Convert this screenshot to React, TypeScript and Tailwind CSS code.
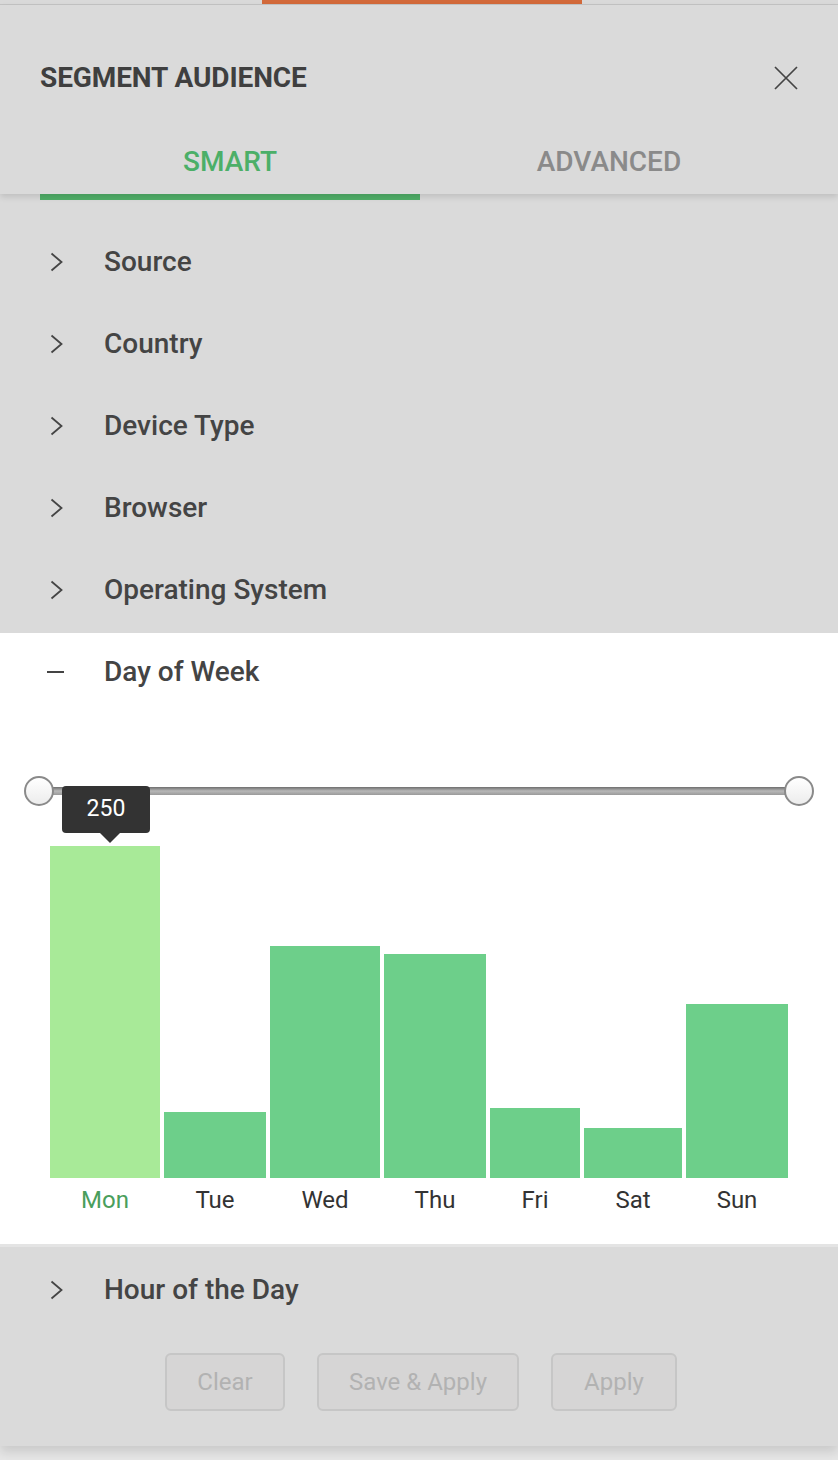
const rows = ["Source", "Country", "Device Type", "Browser", "Operating System"];

const days = [
  { label: "Mon", w: 110, h: 332, active: true },
  { label: "Tue", w: 102, h: 66 },
  { label: "Wed", w: 110, h: 232 },
  { label: "Thu", w: 102, h: 224 },
  { label: "Fri", w: 90, h: 70 },
  { label: "Sat", w: 98, h: 50 },
  { label: "Sun", w: 102, h: 174 },
];

function Chevron() {
  return (
    <svg width="14" height="20" viewBox="0 0 14 20" className="ml-[50px] text-[#444]" fill="none">
      <path d="M1.5 1.5 L11.5 10 L1.5 18.5" stroke="currentColor" strokeWidth="1.8" />
    </svg>
  );
}

function Row({ label }: { label: string }) {
  return (
    <div className="flex h-[82px] items-center">
      <Chevron />
      <span className="ml-[40px] text-[28px] font-medium text-[#444]">{label}</span>
    </div>
  );
}

export default function App() {
  return (
    <div
      className="min-h-[1460px] w-[838px] bg-[#e6e6e6]"
      style={{ fontFamily: "Roboto, 'Liberation Sans', sans-serif" }}
    >
      <div className="relative h-[5px] border-b border-[#c4c4c4] bg-[#d9d9d9]">
        <div className="absolute left-[262px] top-0 h-[4px] w-[320px] bg-[#d2693a]" />
      </div>

      <div className="bg-[#dadada] shadow-[0_6px_10px_rgba(0,0,0,0.12)]">
        <div className="relative z-10 bg-[#dadada] shadow-[0_3px_6px_rgba(0,0,0,0.12)]">
          <div className="flex h-[140px] items-center justify-between pl-[40px] pr-[40px] pt-[6px]">
            <h1 className="text-[28px] font-bold tracking-[-0.1px] text-[#3f3f3f]">SEGMENT AUDIENCE</h1>
            <svg width="24" height="24" viewBox="0 0 24 24" fill="none" className="text-[#444]">
              <path d="M1 1 L23 23 M23 1 L1 23" stroke="currentColor" strokeWidth="1.7" />
            </svg>
          </div>
          <div className="flex h-[49px] px-[40px] pt-[3px]">
            <div className="flex w-[380px] justify-center">
              <span className="text-[28px] font-medium leading-[28px] text-[#4caf68]">SMART</span>
            </div>
            <div className="flex w-[378px] justify-center">
              <span className="text-[28px] font-medium leading-[28px] text-[#8a8a8a]">ADVANCED</span>
            </div>
          </div>
        </div>
        <div className="px-[40px]">
          <div className="h-[6px] w-[380px] bg-[#50ae68]" />
        </div>

        <div className="pt-[21px]">
          {rows.map((r) => (
            <Row key={r} label={r} />
          ))}
        </div>

        <div className="mt-[2px] bg-white">
          <div className="flex h-[78px] items-center">
            <div className="ml-[47px] h-[2.5px] w-[17px] bg-[#444]" />
            <span className="ml-[40px] text-[28px] font-medium text-[#444]">Day of Week</span>
          </div>

          <div className="relative mx-[24px] mt-[65px] h-[30px]">
            <div className="absolute left-[14px] right-[14px] top-[11px] h-[8px] rounded-sm bg-gradient-to-b from-[#6e6e6e] via-[#b8b8b8] to-[#9a9a9a]" />
            <div className="absolute left-0 top-0 h-[30px] w-[30px] rounded-full border-2 border-[#8a8a8a] bg-gradient-to-b from-white to-[#ececec]" />
            <div className="absolute right-0 top-0 h-[30px] w-[30px] rounded-full border-2 border-[#8a8a8a] bg-gradient-to-b from-white to-[#ececec]" />
            <div className="absolute left-[38px] top-[10px] flex h-[47px] w-[88px] items-center justify-center rounded-[4px] bg-[#333] text-[23px] text-white">
              250
              <div className="absolute bottom-[-10px] left-[38px] h-0 w-0 border-x-[10px] border-t-[10px] border-x-transparent border-t-[#333]" />
            </div>
          </div>

          <div className="mx-[50px] mt-[40px] flex h-[332px] items-end gap-[4px]">
            {days.map((d) => (
              <div
                key={d.label}
                className={d.active ? "bg-[#a8ea98]" : "bg-[#6dcf8a]"}
                style={{ width: d.w, height: d.h }}
              />
            ))}
          </div>
          <div className="mx-[50px] flex gap-[4px] pb-[28px] pt-[6px]">
            {days.map((d) => (
              <div
                key={d.label}
                className={`text-center text-[24px] leading-[32px] ${d.active ? "text-[#4a9e5c]" : "text-[#333]"}`}
                style={{ width: d.w }}
              >
                {d.label}
              </div>
            ))}
          </div>
        </div>

        <div className="border-t-[3px] border-[#e4e4e4] pt-[2px]">
          <Row label="Hour of the Day" />
        </div>

        <div className="flex justify-center gap-[32px] pb-[35px] pl-[4px] pt-[22px]">
          <button className="h-[58px] w-[120px] rounded-[6px] border-2 border-[#c6c6c6] bg-[#d6d5d5] text-[24px] text-[#b2b2b2]">
            Clear
          </button>
          <button className="h-[58px] w-[202px] rounded-[6px] border-2 border-[#c6c6c6] bg-[#d6d5d5] text-[24px] text-[#b2b2b2]">
            Save &amp; Apply
          </button>
          <button className="h-[58px] w-[126px] rounded-[6px] border-2 border-[#c6c6c6] bg-[#d6d5d5] text-[24px] text-[#b2b2b2]">
            Apply
          </button>
        </div>
      </div>
    </div>
  );
}
